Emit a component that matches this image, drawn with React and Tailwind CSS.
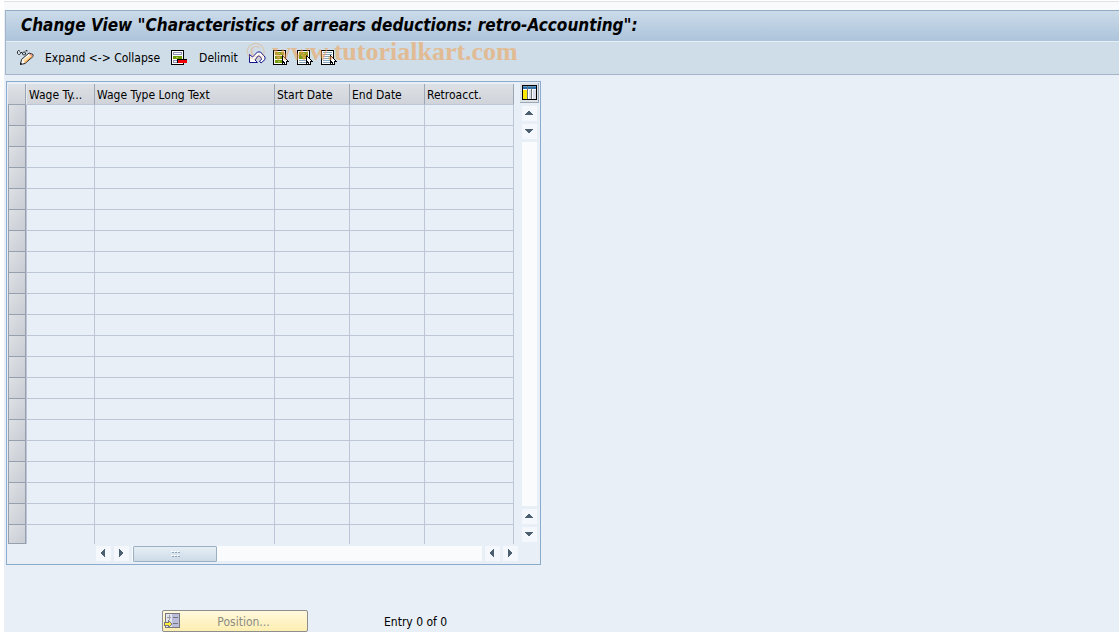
import { clsx } from "clsx";

const columns = [
  { label: "Wage Ty...", width: "w-[68px]" },
  { label: "Wage Type Long Text", width: "w-[180px]" },
  { label: "Start Date", width: "w-[75px]" },
  { label: "End Date", width: "w-[75px]" },
  { label: "Retroacct.", width: "w-[90px]" },
];

const rows = Array.from({ length: 21 }, (_, i) => i);

const arrows = {
  up: "M3 9h8v-1h-1v-1h-1v-1h-1v-1h-2v1h-1v1h-1v1h-1z",
  down: "M3 5h8v1h-1v1h-1v1h-1v1h-2v-1h-1v-1h-1v-1h-1z",
  left: "M9 3v8h-1v-1h-1v-1h-1v-1h-1v-2h1v-1h1v-1h1v-1z",
  right: "M5 3v8h1v-1h1v-1h1v-1h1v-2h-1v-1h-1v-1h-1v-1z",
};

function ToggleIcon() {
  return (
    <svg width="17" height="16" viewBox="0 0 17 16">
      <path
        d="M0.5 1.500l1-1h1M0.500 1.500v2l1 1h1l1-1v-1l-1-1M4 2.500h1M5.500 3v1l1 1h1l1-1v-1l-1-1h-1zM8 1.500l1-1h1v1"
        fill="none"
        stroke="#222"
      />
      <path d="M3.500 14.500l1-5 7.500-6.500 4 1.500v2l-8 7z" fill="#fff" stroke="#222" />
      <path d="M6 10l7-5 1 1-7 6z" fill="#ffdf9a" />
      <path d="M7 12.500l7-6 1.500-1v1l-7.500 6.500z" fill="#f3922b" />
      <path d="M12.500 3.500l2.500 1v1.500l-2.500-1z" fill="#e8836c" />
      <path d="M3 15v-2.500l2 1z" fill="#111" />
    </svg>
  );
}

function DelimitIcon() {
  return (
    <svg width="17" height="16" viewBox="0 0 17 16" shapeRendering="crispEdges">
      <rect width="13" height="15" fill="#000" />
      <rect x="1" y="1" width="11" height="13" fill="#fff" />
      <rect x="2" y="2" width="9" height="3" fill="#8f91b8" />
      <rect x="3" y="3" width="7" height="1" fill="#fff" />
      <rect x="2" y="6" width="9" height="3" fill="#6f9a08" />
      <rect x="5" y="7" width="2" height="1" fill="#b2cf62" />
      <rect x="2" y="10" width="6" height="3" fill="#8f91b8" />
      <rect x="3" y="11" width="4" height="1" fill="#fff" />
      <rect x="6" y="9" width="10" height="4" fill="#000" />
      <rect x="7" y="10" width="9" height="3" fill="#f00000" />
    </svg>
  );
}

function UndoIcon() {
  return (
    <svg width="17" height="16" viewBox="0 0 17 16">
      <path
        d="M0.500 4.500v8h8l-2.500-2.500 3-4h1.500l2 2.500v1l-2 1.500 1.500 2 4-3.500v-2.500l-4.500-5h-3l-5 5z"
        fill="#fff"
        stroke="#15158a"
      />
    </svg>
  );
}

function SelectIcon({ kind }) {
  return (
    <svg width="17" height="16" viewBox="0 0 17 16" shapeRendering="crispEdges">
      <rect width="13" height="15" fill="#000" />
      <rect x="1" y="1" width="11" height="13" fill="#fff" />
      {kind === "all" && (
        <g fill="#789c10">
          <rect x="2" y="2" width="9" height="3" />
          <rect x="2" y="6" width="9" height="3" />
          <rect x="2" y="10" width="9" height="3" />
          <path d="M5 3h2v1h-2zM5 7h2v1h-2zM5 11h2v1h-2z" fill="#a9c64c" />
        </g>
      )}
      {kind === "block" && (
        <g>
          <rect x="2" y="2" width="9" height="7" fill="#789c10" />
          <path d="M4 5h2v1h-2zM6 3h2v1h-2zM8 5h2v1h-2zM6 7h2v1h-2z" fill="#a9c64c" />
          <path d="M2 10h9v1h-9zM2 12h9v1h-9z" fill="#82a3b8" />
        </g>
      )}
      {kind === "none" && (
        <path
          d="M2 2h9v1h-9zM2 4h9v1h-9zM2 6h9v1h-9zM2 8h9v1h-9zM2 10h9v1h-9zM2 12h9v1h-9z"
          fill="#82a3b8"
        />
      )}
      <path
        d="M9 5h1v1h1v1h1v1h1v1h1v1h1v1h1v1h-2v3h-3v-2h-1v1h-1z"
        fill="#000"
      />
      <path d="M10 7h1v1h1v1h1v1h1v1h-1v3h-1v-2h-1v-1h-1z" fill="#fff" />
    </svg>
  );
}

function ConfigIcon() {
  return (
    <svg width="15" height="15" viewBox="0 0 15 15" shapeRendering="crispEdges">
      <rect width="15" height="15" fill="#000" />
      <rect x="1" y="1" width="13" height="13" fill="#fff" />
      <rect x="1" y="1" width="13" height="3" fill="#2d72ad" />
      <path d="M1 1h13v1h-13z" fill="#5b9bcc" />
      <rect x="1" y="5" width="4" height="9" fill="#ffe600" />
      <rect x="5" y="1" width="1" height="13" fill="#6d7478" />
      <rect x="7" y="5" width="2" height="9" fill="#d9dce8" />
      <rect x="9" y="1" width="1" height="13" fill="#6d7478" />
      <rect x="11" y="5" width="3" height="9" fill="#d9dce8" />
    </svg>
  );
}

function PositionIcon() {
  return (
    <svg width="16" height="16" viewBox="0 0 16 16" shapeRendering="crispEdges">
      <rect x="1" width="15" height="15" fill="#77787c" />
      <rect x="2" y="1" width="13" height="13" fill="#e3e4ee" />
      <rect x="8" y="1" width="7" height="13" fill="#bcbdda" />
      <path d="M9 4h5v1h-5zM9 10h5v1h-5z" fill="#77787c" />
      <path d="M3 4h4v1h-4zM5 2h1v5h-1z" fill="#9a9ba3" />
      <path d="M0 9h4v-2l4 4-4 4v-2h-4z" fill="#77787c" />
      <path d="M1 10h4v-1l2 2-2 2v-1h-4z" fill="#ffee38" />
    </svg>
  );
}

function ToolButton({ label, children }) {
  return (
    <button type="button" aria-label={label} className="shrink-0">
      {children}
    </button>
  );
}

function ScrollButton({ direction }) {
  return (
    <button
      type="button"
      aria-label={`Scroll ${direction}`}
      className="h-[15px] w-[15px] shrink-0 bg-[#f4f7fb]"
    >
      <svg width="15" height="15" viewBox="0 0 15 15" shapeRendering="crispEdges">
        <path d={arrows[direction]} fill="#4c6070" />
      </svg>
    </button>
  );
}

function Header() {
  return (
    <header className="relative border-y border-l border-t-[#92acc6] border-b-[#a3b5c7] border-l-[#a3b5c7]">
      <div className="flex h-[31px] items-center border-b border-[#e6eef6] bg-linear-to-b from-[#cbdbe9] to-[#adc4db] px-[15px] pb-0.5">
        <h1 className="font-['DejaVu_Sans_Condensed','DejaVu_Sans',sans-serif] text-[17px] font-bold whitespace-nowrap italic">
          Change View "Characteristics of arrears deductions: retro-Accounting":
        </h1>
      </div>
      <div className="flex h-8 items-center gap-[11px] bg-[#cfdde8] px-[11px] whitespace-nowrap">
        <ToolButton label="Display/Change">
          <ToggleIcon />
        </ToolButton>
        <button type="button">Expand &lt;-&gt; Collapse</button>
        <ToolButton label="Delete">
          <DelimitIcon />
        </ToolButton>
        <button type="button">Delimit</button>
        <div className="flex gap-[7px]">
          <ToolButton label="Undo">
            <UndoIcon />
          </ToolButton>
          <ToolButton label="Select all">
            <SelectIcon kind="all" />
          </ToolButton>
          <ToolButton label="Select block">
            <SelectIcon kind="block" />
          </ToolButton>
          <ToolButton label="Deselect all">
            <SelectIcon kind="none" />
          </ToolButton>
        </div>
      </div>
      <div className="pointer-events-none absolute top-[26px] left-[240px] font-['Liberation_Serif',serif] text-[26px] leading-[30px] font-bold whitespace-nowrap text-[#f0a050] opacity-55">
        <span className="font-normal opacity-70">©</span> www.tutorialkart.com
      </div>
    </header>
  );
}

function DataTable() {
  return (
    <table className="w-[506px] table-fixed border-separate border-spacing-0">
      <thead>
        <tr className="h-[21px]">
          <th
            aria-label="Select"
            className="w-[18px] border-r border-b border-[#9aa5b3] bg-linear-to-b from-[#e0e4e8] to-[#cfd3d9] p-0"
          />
          {columns.map((column, i) => (
            <th
              key={column.label}
              className={clsx(
                "border-b border-l border-b-[#bcc6d6] bg-linear-to-b from-[#dde1e5] to-[#d0d4da] p-0 pt-0.5 pl-0.5 text-left font-normal whitespace-nowrap",
                i === 0 ? "border-l-[#e6eaee]" : "border-l-[#9ca7b5]",
                i === columns.length - 1 && "border-r border-r-[#9ca7b5]",
                column.width,
              )}
            >
              {column.label}
            </th>
          ))}
        </tr>
      </thead>
      <tbody>
        {rows.map((row) => (
          <tr key={row} className="h-[21px] last:h-[19px]">
            <td className="border-r border-b border-l border-[#959fad] bg-linear-to-br from-[#dde0e4] to-[#c9cdd4] p-0" />
            {columns.map((column, i) => (
              <td
                key={column.label}
                className={clsx(
                  "border-l border-[#bcc6d6] p-0",
                  row < rows.length - 1 && "border-b",
                  i === columns.length - 1 && "border-r",
                )}
              />
            ))}
          </tr>
        ))}
      </tbody>
    </table>
  );
}

function HorizontalScroll() {
  return (
    <div className="flex gap-[3px] pt-0.5 pr-[21px] pl-[88px]">
      <ScrollButton direction="left" />
      <ScrollButton direction="right" />
      <div className="h-[15px] flex-1 bg-[#fafbfc] pl-px">
        <div className="flex h-4 w-[84px] items-center justify-center rounded-[1px] border border-[#9bb0c2] bg-linear-to-b from-[#e6eef5] to-[#cddbe8]">
          <svg width="9" height="6" viewBox="0 0 9 6" shapeRendering="crispEdges">
            <path d="M1 1h2v1h-2zM4 1h2v1h-2zM7 1h2v1h-2zM1 5h2v1h-2zM4 5h2v1h-2zM7 5h2v1h-2z" fill="#8ea3b6" />
            <path d="M0 0h2v1h-2zM3 0h2v1h-2zM6 0h2v1h-2zM0 4h2v1h-2zM3 4h2v1h-2zM6 4h2v1h-2z" fill="#fff" />
          </svg>
        </div>
      </div>
      <ScrollButton direction="left" />
      <ScrollButton direction="right" />
    </div>
  );
}

function VerticalScroll() {
  return (
    <div className="flex flex-col items-center gap-[3px] pb-0.5">
      <button
        type="button"
        aria-label="Table settings"
        className="flex h-5 w-[19px] items-center justify-center border-r border-b border-[#9ca7b5] bg-[#dce1e7]"
      >
        <ConfigIcon />
      </button>
      <ScrollButton direction="up" />
      <ScrollButton direction="down" />
      <div className="w-[15px] flex-1 bg-[#fafbfc]" />
      <ScrollButton direction="up" />
      <ScrollButton direction="down" />
    </div>
  );
}

export default function App() {
  return (
    <div className="min-h-screen bg-white pl-1 font-['DejaVu_Sans_Condensed','DejaVu_Sans',sans-serif] text-[12px] leading-4 text-black">
      <div className="mt-px h-[9px] border-t border-[#dfe3e7] bg-[#f8fafc]" />
      <div className="min-h-[calc(100vh-10px)] bg-[#e8eff6] pl-px">
        <Header />
        <main className="pt-1.5 pl-px">
          <section className="w-fit border border-[#8aabcb] pt-px pr-px pb-[3px] pl-px">
            <div className="flex gap-1.5">
              <div className="pt-px">
                <DataTable />
              </div>
              <VerticalScroll />
            </div>
            <HorizontalScroll />
          </section>
          <div className="mt-[45px] flex items-center pl-[156px]">
            <button
              type="button"
              className="flex h-[22px] w-[146px] items-center rounded-xs border border-[#8e8e8e] bg-linear-to-b from-[#fff9dd] to-[#fdeeb0] pl-px text-[#8c8c84]"
            >
              <PositionIcon />
              <span className="flex-1 pt-0.5">Position...</span>
            </button>
            <span className="pt-0.5 pl-[76px]">Entry 0 of 0</span>
          </div>
        </main>
      </div>
    </div>
  );
}
